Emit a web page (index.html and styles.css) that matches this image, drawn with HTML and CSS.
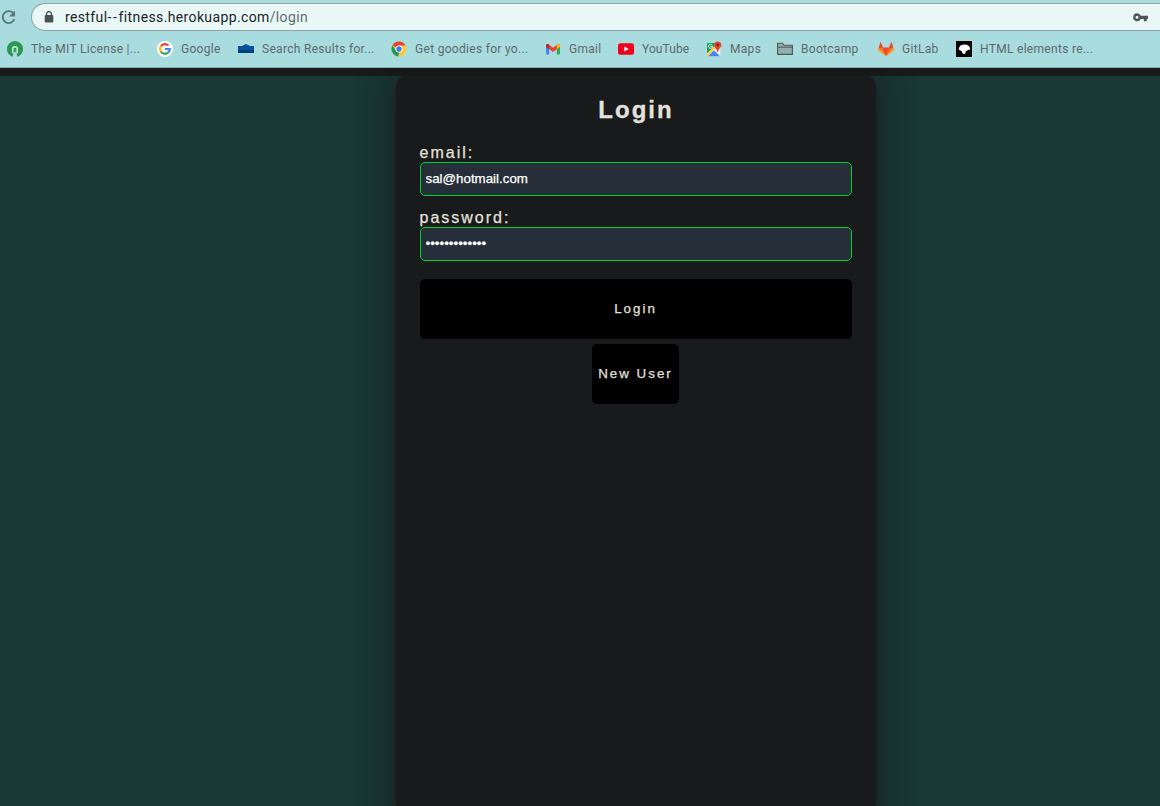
FILE: index.html
```html
<!DOCTYPE html>
<html lang="en">
<head>
<meta charset="utf-8">
<title>Login</title>
<link rel="stylesheet" href="styles.css">
</head>
<body>
<header class="browser">
  <div class="toolbar">
    <svg class="reload" width="18" height="16" viewBox="0 0 18 16"><path d="M14.6 4.6A6 6 0 1 0 15.4 10" fill="none" stroke="#5c7778" stroke-width="1.9"/><path d="M16 1.5v6h-6z" fill="#5c7778"/></svg>
    <div class="address">
      <svg class="lock" width="10" height="12" viewBox="0 0 10 12"><rect x=".7" y="4" width="8.6" height="7.6" rx="1" fill="#4c5254"/><path d="M2.6 5V3a2.4 2.4 0 0 1 4.8 0v2" fill="none" stroke="#4c5254" stroke-width="1.3"/></svg>
      <span class="url">restful<span class="dashes">--</span>fitness.herokuapp.com<span class="path">/login</span></span>
      <svg class="key" width="15" height="9" viewBox="0 0 15 9"><path fill="#505658" fill-rule="evenodd" d="M4 .3a4 4 0 0 1 3.8 2.5H15V6h-1.2v2.2h-3V6h-3A4 4 0 1 1 4 .3zm0 2.5a1.5 1.5 0 1 0 0 3 1.5 1.5 0 0 0 0-3z"/></svg>
    </div>
  </div>
  <nav class="bookmarks">
    <a class="bookmark mit"><svg viewBox="0 0 16 16"><path d="M5.6 15.4A7.7 7.7 0 1 1 10.4 15.4L9.4 11.8V8.4H6.6v3.4z" fill="#299b50" stroke="#1b7444" stroke-width=".5"/><path d="M5.7 12.2V8a2.3 2.3 0 0 1 4.6 0v4.2" fill="none" stroke="#d7f1e6" stroke-width="1.5"/><path d="M7.2 8.3h1.6v3.2H7.2z" fill="#2a9a56"/><path d="M6.5 11.5h3l.8 4.5H5.7z" fill="#a9dcdf"/></svg><span>The MIT License |...</span></a>
    <a class="bookmark google"><svg viewBox="0 0 16 16"><circle cx="8" cy="8" r="8" fill="#fff"/><g fill="none" stroke-width="2.2"><path d="M4 5.4A4.8 4.8 0 0 1 11.5 4.6" stroke="#ea4335"/><path d="M4 5.2a5 5 0 0 0 0 5.5" stroke="#fbbc05"/><path d="M3.9 10.5a4.8 4.8 0 0 0 7.1 1.2" stroke="#34a853"/><path d="M8 8h4.8a4.8 4.8 0 0 1-1.8 3.7" stroke="#4285f4"/></g></svg><span>Google</span></a>
    <a class="bookmark search"><svg viewBox="0 0 16 16"><path d="M0 5h4l4-1.9L12 5h4v7H0z" fill="#07529a"/><path d="M0 9h16v3H0z" fill="#04407c"/></svg><span>Search Results for...</span></a>
    <a class="bookmark goodies"><svg viewBox="0 0 16 16"><circle cx="8" cy="8" r="7.5" fill="#fbc936"/><path d="M8 8 1.5 4.2A7.5 7.5 0 0 1 14.5 4.5H8z" fill="#e24436"/><path d="M1.5 4.2 5 10l3.4 1L7 15.4A7.5 7.5 0 0 1 1.5 4.2z" fill="#169b58"/><circle cx="8" cy="8" r="3.5" fill="#fff"/><circle cx="8" cy="8" r="2.7" fill="#3c7de9"/></svg><span>Get goodies for yo...</span></a>
    <a class="bookmark gmail"><svg viewBox="0 0 16 16"><path d="M1 4.5v8q0 .9 1 .9h2.2V6.5z" fill="#4285f4"/><path d="M15 4.5v8q0 .9-1 .9h-2.2V6.5z" fill="#34a853"/><path d="M1 4.7q0-2 2-1.8l5 3.8 5-3.8q2-.2 2 1.8v1.1L8 11 1 5.8z" fill="#ea4335"/><path d="M11.8 4 13 2.9q2-.2 2 1.8v1.1l-3.2 2.4z" fill="#fbbc04"/><path d="M1 4.7q0-2 2-1.8L4.2 4v4.2L1 5.8z" fill="#c5221f"/></svg><span>Gmail</span></a>
    <a class="bookmark youtube"><svg viewBox="0 0 16 16"><rect y="2.3" width="16" height="11.4" rx="2.5" fill="#f0001b"/><path d="m6.3 5.6 4.4 2.4-4.4 2.4z" fill="#fff"/></svg><span>YouTube</span></a>
    <a class="bookmark maps"><svg viewBox="0 0 16 16"><rect x="1" y="2" width="13.3" height="13.2" rx="1" fill="#f0f2f2"/><path d="M1 3q0-1 1-1h8.5v4L1 14z" fill="#199d5a"/><path d="m2 15.2 6-6 6 6z" fill="#4285f4"/><path d="m1 12.3 9-8.7 1.2 1.7L2 15.2H1z" fill="#ffd04b"/><path d="M6.5 5.5A2 2 0 1 1 6.2 4.3M4.5 5.5h2" fill="none" stroke="#fff" stroke-width=".9"/><path d="M11.7.5a3.6 3.6 0 0 1 3.6 3.6c0 2.6-2.5 3.3-3.4 7.2h-.4c-.9-3.9-3.4-4.6-3.4-7.2A3.6 3.6 0 0 1 11.7.5z" fill="#e74335"/><circle cx="11.7" cy="4" r="1.4" fill="#7b231e"/></svg><span>Maps</span></a>
    <a class="bookmark bootcamp"><svg viewBox="0 0 16 16"><path d="M.6 13.4V2.3h5l1.5 2h8.3v9.1z" fill="#91aeb0" stroke="#535658" stroke-width="1.1"/><path d="M.6 6.2h14.8" stroke="#535658" stroke-width="1"/></svg><span>Bootcamp</span></a>
    <a class="bookmark gitlab"><svg viewBox="0 0 16 16"><path d="m8 15-8-6L2.6 1l2.5 5.5h5.8L13.4 1 16 9z" fill="#fc6d26"/><path d="M2.6 1 5 6.7H.8zm10.8 0L11 6.7h4.2zM5 6.7h6L8 15z" fill="#e64832"/><path d="M.8 6.7 0 9l8 6zm14.4 0L16 9l-8 6z" fill="#fca326"/></svg><span>GitLab</span></a>
    <a class="bookmark html"><svg viewBox="0 0 16 16"><path d="M0 0h16v16H0z" fill="#000"/><path d="M2.6 7.6 4.4 4.4l3-.9 3.6.3 2.5 2 .9 2.5-2.8.9-2 1.2-.2 1.9-1.3 1-1.8-1.2-.7-2L3.2 9z" fill="#fff"/></svg><span>HTML elements re...</span></a>
  </nav>
</header>
<main class="page">
  <section class="card">
    <h1 class="title">Login</h1>
    <form class="form">
      <label class="label" for="email">email:</label>
      <input class="field" id="email" type="text" value="sal@hotmail.com">
      <label class="label" for="password">password:</label>
      <input class="field" id="password" type="password" value="abcdefghijklm">
      <button class="button submit" type="button">Login</button>
      <button class="button new-user" type="button">New User</button>
    </form>
  </section>
</main>
</body>
</html>
```
FILE: styles.css
```css
* { box-sizing: border-box; }
body {
  margin: 0;
  height: 806px;
  display: flex;
  flex-direction: column;
  overflow: hidden;
  background: #181a1b;
  font-family: "Liberation Sans", Arial, sans-serif;
}
.browser {
  position: relative;
  z-index: 1;
  height: 68px;
  flex: none;
  background: #a9dcdf;
  border-bottom: 1px solid #85adae;
  font-family: Roboto, sans-serif;
}
.toolbar { display: flex; padding-top: 3px; height: 31px; }
.reload { flex: none; margin: 6px 14px 0 -1px; }
.address {
  flex: 1;
  height: 28px;
  display: flex;
  align-items: center;
  padding: 0 12px;
  background: #e9f7f7;
  border: 1px solid #8fa3a4;
  border-right: 0;
  border-radius: 14px 0 0 14px;
}
.lock { margin-right: 11px; }
.url { flex: 1; font-size: 14px; letter-spacing: .37px; color: #202426; white-space: nowrap; }
.dashes { letter-spacing: 1.7px; }
.path { color: #626b6d; }
.bookmarks { display: flex; height: 36px; align-items: center; padding-left: 7px; }
.bookmark {
  flex: none;
  display: flex;
  align-items: center;
  gap: 8px;
  font-size: 12px;
  letter-spacing: .3px;
  color: #5f696b;
  white-space: nowrap;
}
.bookmark svg { flex: none; width: 16px; height: 16px; }
.mit { width: 150px; }
.google { width: 81px; }
.search { width: 153px; }
.goodies { width: 154px; }
.gmail { width: 73px; }
.youtube { width: 88px; letter-spacing: .1px; }
.maps { width: 71px; }
.bootcamp { width: 101px; }
.gitlab { width: 78px; }
.html { width: 138px; }
.page {
  flex: 1;
  min-height: 0;
  margin-top: 8px;
  padding-left: 396px;
  background: #193735;
}
.card {
  width: 480px;
  height: 760px;
  padding: 20px 24px;
  background: #181a1b;
  border-radius: 10px;
  box-shadow: 0 0 35px rgba(20, 22, 20, .85);
  color: #e4e1dc;
}
.title {
  margin: 0 0 19px;
  font-size: 24px;
  line-height: 28px;
  letter-spacing: 2px;
  text-align: center;
  -webkit-text-stroke: .3px;
}
.form { display: flex; flex-direction: column; }
.label {
  margin-left: -.5px;
  font-size: 16px;
  line-height: 19px;
  letter-spacing: 2px;
  -webkit-text-stroke: .25px;
}
.field {
  width: 100%;
  height: 34px;
  margin: 0 0 12px;
  padding: 0 4.5px 2px;
  border: 1px solid #00d42c;
  border-radius: 5px;
  background: #262e39;
  color: #fff;
  font: 13.333px "Liberation Sans", Arial, sans-serif;
  -webkit-text-stroke: .25px;
}
.button {
  height: 60px;
  padding: 0 6px 2px 5px;
  border: 0;
  border-radius: 5px;
  background: #000;
  color: #e4e1dc;
  font: 13.333px "Liberation Sans", Arial, sans-serif;
  letter-spacing: 2px;
  white-space: nowrap;
  -webkit-text-stroke: .25px;
}
.submit { margin-top: 6px; }
.new-user { width: 87px; padding-left: 6px; margin: 5px 1px 0 0; align-self: center; }
```
